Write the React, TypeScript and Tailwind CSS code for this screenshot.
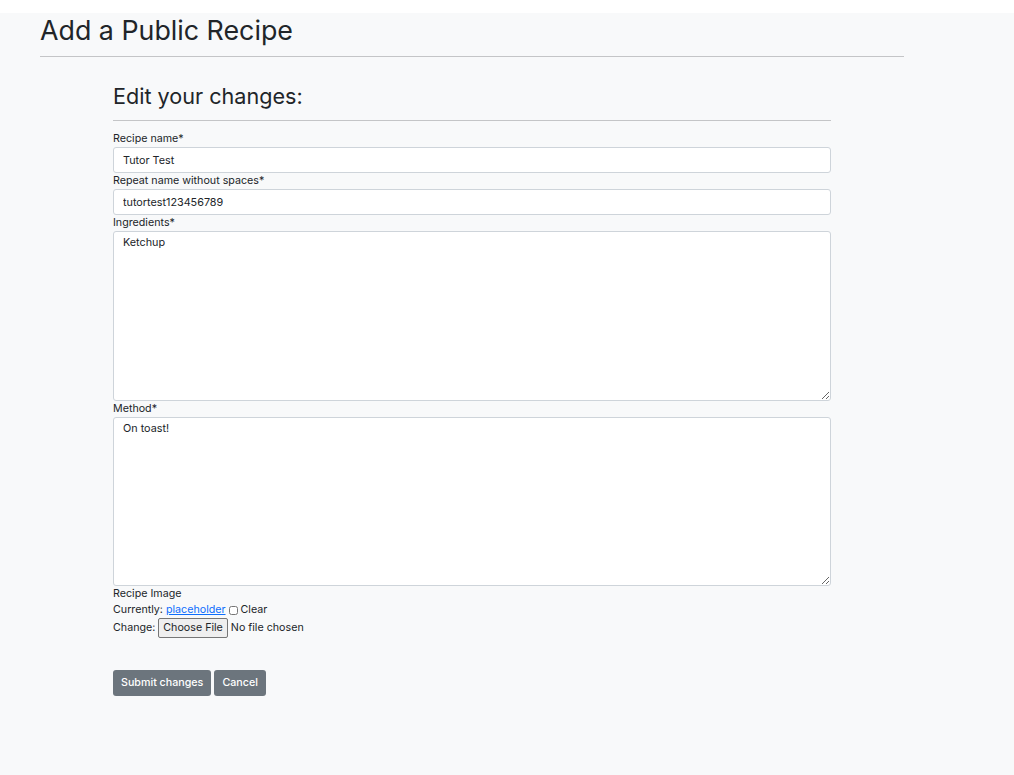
import React, { useState } from 'react';

const inputCls =
  'block w-full h-[26px] rounded-[3px] border border-[#ced4da] bg-white px-[9px] text-[10.8px] text-[#212529] outline-none';
const areaCls =
  'block w-full rounded-[3px] border border-[#ced4da] bg-white px-[9px] pt-[3px] text-[10.8px] leading-[16px] text-[#212529] outline-none';

const Label: React.FC<{ children: React.ReactNode }> = ({ children }) => (
  <label className="block h-[16px] text-[10.7px] leading-[16px] text-[#212529]">{children}</label>
);

const App: React.FC = () => {
  const [name, setName] = useState('Tutor Test');
  const [slug, setSlug] = useState('tutortest123456789');
  const [ingredients, setIngredients] = useState('Ketchup');
  const [method, setMethod] = useState('On toast!');

  return (
    <div className="min-h-screen bg-white pt-[13px] font-['Inter',sans-serif] text-[#212529]">
      <div className="min-h-[762px] bg-[#f8f9fa] px-[40px]">
        {/* Page title */}
        <div className="w-[864px]">
          <h1 className="text-[26.8px] leading-[34px] font-normal">Add a Public Recipe</h1>
          <hr className="mt-[9px] border-t border-[#c4c5c7]" />
        </div>

        {/* Edit form */}
        <div className="ml-[73px] w-[718px] pt-[26px]">
          <h2 className="text-[21.6px] leading-[26px] font-normal">Edit your changes:</h2>
          <hr className="mt-[11px] mb-[10px] border-t border-[#c4c5c7]" />

          <form onSubmit={(e) => e.preventDefault()}>
            <Label>Recipe name*</Label>
            <input className={inputCls} value={name} onChange={(e) => setName(e.target.value)} />

            <Label>Repeat name without spaces*</Label>
            <input className={inputCls} value={slug} onChange={(e) => setSlug(e.target.value)} />

            <Label>Ingredients*</Label>
            <textarea
              className={`${areaCls} h-[170px]`}
              value={ingredients}
              onChange={(e) => setIngredients(e.target.value)}
            />

            <Label>Method*</Label>
            <textarea
              className={`${areaCls} h-[169px]`}
              value={method}
              onChange={(e) => setMethod(e.target.value)}
            />

            <div className="text-[10.7px] leading-[16px] text-[#212529]">
              <div>Recipe Image</div>
              <div className="flex items-center">
                <span>Currently:&nbsp;</span>
                <a href="#" className="text-[#0d6efd] underline">placeholder</a>
                <input type="checkbox" className="ml-[3px] mr-[3px] h-[9px] w-[9px]" />
                <span>Clear</span>
              </div>
              <div className="flex items-center">
                <span>Change:&nbsp;</span>
                <input
                  type="file"
                  className="text-[10.7px] file:mr-[3px] file:h-[20px] file:rounded-[2px] file:border file:border-[#767676] file:bg-[#efefef] file:px-[4px] file:text-[10.7px] file:text-[#212529]"
                />
              </div>
            </div>

            <div className="mt-[32px] flex gap-[3px]">
              <button
                type="submit"
                className="h-[26px] rounded-[3px] bg-[#6c757d] px-[8px] text-[10.7px] font-medium text-white"
              >
                Submit changes
              </button>
              <button
                type="button"
                className="h-[26px] rounded-[3px] bg-[#6c757d] px-[8px] text-[10.7px] font-medium text-white"
              >
                Cancel
              </button>
            </div>
          </form>
        </div>
      </div>
    </div>
  );
};

export default App;
